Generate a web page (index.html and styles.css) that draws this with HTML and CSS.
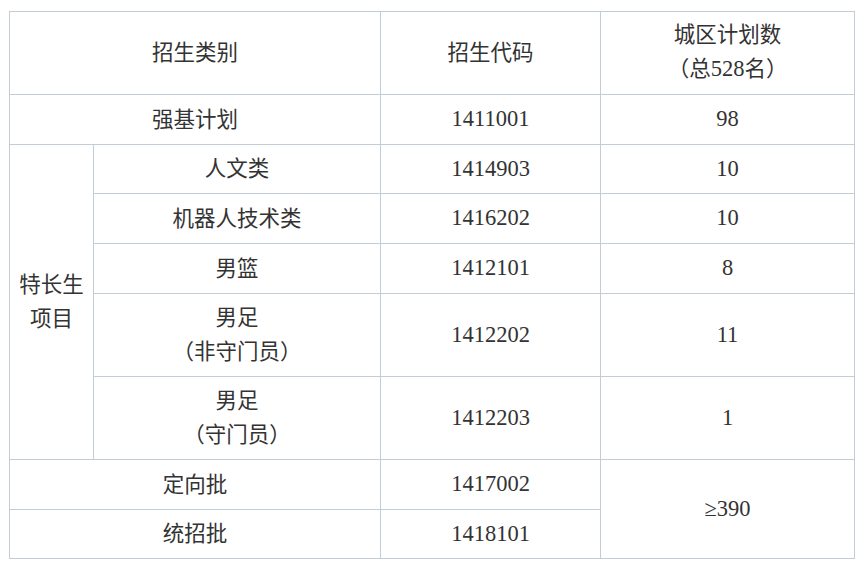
FILE: index.html
```html
<!DOCTYPE html>
<html lang="zh">
<head>
<meta charset="utf-8">
<link rel="stylesheet" href="styles.css">
</head>
<body>
<div class="wrap">
<table class="plan">
  <colgroup>
    <col class="c1"><col class="c2"><col class="c3"><col class="c4">
  </colgroup>
  <tr class="h83">
    <td colspan="2">招生类别</td>
    <td>招生代码</td>
    <td>城区计划数<br>（总<span class="num">528</span>名）</td>
  </tr>
  <tr class="h50">
    <td colspan="2">强基计划</td>
    <td class="num">1411001</td>
    <td class="num">98</td>
  </tr>
  <tr class="h49">
    <td rowspan="5">特长生<br>项目</td>
    <td>人文类</td>
    <td class="num">1414903</td>
    <td class="num">10</td>
  </tr>
  <tr class="h50">
    <td>机器人技术类</td>
    <td class="num">1416202</td>
    <td class="num">10</td>
  </tr>
  <tr class="h50">
    <td>男篮</td>
    <td class="num">1412101</td>
    <td class="num">8</td>
  </tr>
  <tr class="h83">
    <td>男足<br>（非守门员）</td>
    <td class="num">1412202</td>
    <td class="num">11</td>
  </tr>
  <tr class="h83">
    <td>男足<br>（守门员）</td>
    <td class="num">1412203</td>
    <td class="num">1</td>
  </tr>
  <tr class="h50">
    <td colspan="2">定向批</td>
    <td class="num">1417002</td>
    <td class="num" rowspan="2">≥390</td>
  </tr>
  <tr class="h49">
    <td colspan="2">统招批</td>
    <td class="num">1418101</td>
  </tr>
</table>
</div>
</body>
</html>
```
FILE: styles.css
```css
html, body {
  margin: 0;
  padding: 0;
  background: #ffffff;
}
.wrap {
  padding: 11px 0 0 9px;
}
.plan {
  border-collapse: collapse;
  table-layout: fixed;
  width: 845px;
  font-family: "Noto Sans CJK SC", "Noto Sans", sans-serif;
  font-size: 21.5px;
  line-height: 34px;
  color: #333333;
}
.c1 { width: 84px; }
.c2 { width: 287px; }
.c3 { width: 220px; }
.c4 { width: 254px; }
.plan td {
  border: 1px solid #c2cdd8;
  text-align: center;
  vertical-align: middle;
  padding: 0 0 4px 0;
}
.plan td.num {
  padding-bottom: 1px;
}
.h83 { height: 83px; }
.h50 { height: 50px; }
.h49 { height: 49px; }
.num {
  font-family: "Liberation Serif", "Times New Roman", serif;
  font-size: 22.5px;
}
```
